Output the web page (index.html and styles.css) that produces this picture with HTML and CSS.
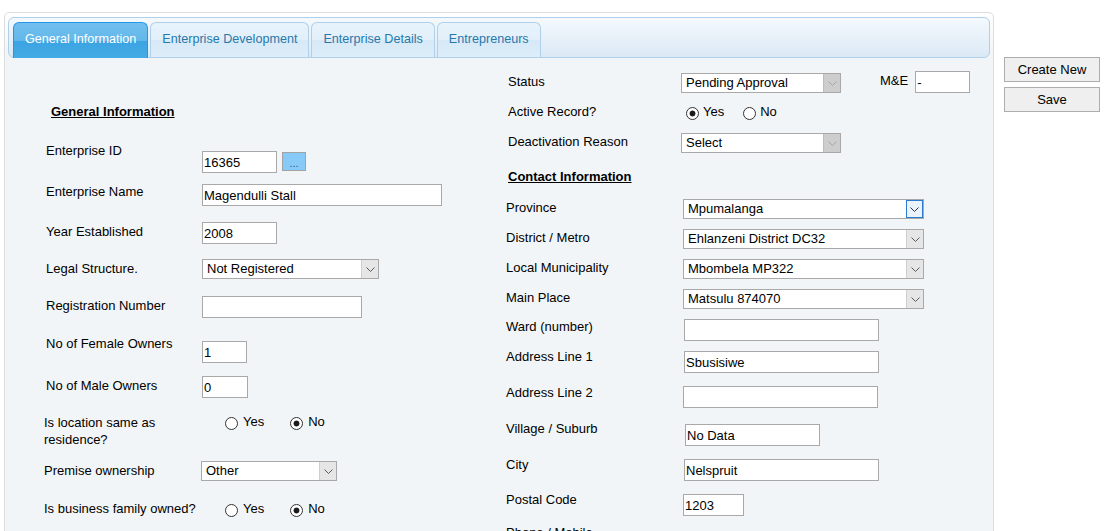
FILE: index.html
```html
<!DOCTYPE html>
<html>
<head>
<meta charset="utf-8">
<title>Enterprise</title>
<link rel="stylesheet" href="styles.css">
</head>
<body>
<div class="page">
  <div class="panel">
    <ul class="tabbar">
      <li class="tab active">General Information</li>
      <li class="tab">Enterprise Development</li>
      <li class="tab">Enterprise Details</li>
      <li class="tab">Entrepreneurs</li>
    </ul>
    <div class="content">
      <div class="col-left">
        <div class="heading">General Information</div>

        <div class="lbl">Enterprise ID</div>
        <div class="ctl ctl-id">
          <input class="txt w75" value="16365">
          <button class="dots">...</button>
        </div>

        <div class="lbl">Enterprise Name</div>
        <div class="ctl ctl-flat"><input class="txt w240" value="Magendulli Stall"></div>

        <div class="lbl">Year Established</div>
        <div class="ctl"><input class="txt w75" value="2008"></div>

        <div class="lbl">Legal Structure.</div>
        <div class="ctl">
          <div class="select w177"><span class="sel-text">Not Registered</span><span class="sel-arrow"><svg width="9" height="5" viewBox="0 0 9 5"><path d="M0.5 0.5 L4.5 4.5 L8.5 0.5"/></svg></span></div>
        </div>

        <div class="lbl">Registration Number</div>
        <div class="ctl"><input class="txt w160" value=""></div>

        <div class="lbl">No of Female Owners</div>
        <div class="ctl ctl-female"><input class="txt w45" value="1"></div>

        <div class="lbl">No of Male Owners</div>
        <div class="ctl"><input class="txt w46" value="0"></div>

        <div class="lbl lbl-wrap lbl-b">Is location same as residence?</div>
        <div class="ctl-radio">
          <div class="radios radios-wide">
            <label class="rad"><input type="radio" name="loc">Yes</label>
            <label class="rad"><input type="radio" name="loc" checked>No</label>
          </div>
        </div>

        <div class="lbl lbl-b">Premise ownership</div>
        <div class="ctl ctl-premise">
          <div class="select w136"><span class="sel-text">Other</span><span class="sel-arrow"><svg width="9" height="5" viewBox="0 0 9 5"><path d="M0.5 0.5 L4.5 4.5 L8.5 0.5"/></svg></span></div>
        </div>

        <div class="lbl lbl-b">Is business family owned?</div>
        <div class="ctl-radio">
          <div class="radios radios-wide">
            <label class="rad"><input type="radio" name="fam">Yes</label>
            <label class="rad"><input type="radio" name="fam" checked>No</label>
          </div>
        </div>
      </div>

      <div class="col-right">
        <div class="lbl lbl-r">Status</div>
        <div class="ctl-status">
          <div class="select w160 disabled"><span class="sel-text">Pending Approval</span><span class="sel-arrow"><svg width="9" height="5" viewBox="0 0 9 5"><path d="M0.5 0.5 L4.5 4.5 L8.5 0.5"/></svg></span></div>
          <span class="me-lbl">M&amp;E</span>
          <span class="me-box"><input class="txt w55" value="-"></span>
        </div>

        <div class="lbl lbl-r">Active Record?</div>
        <div class="ctl-radio">
          <div class="radios radios-tight">
            <label class="rad"><input type="radio" name="act" checked>Yes</label>
            <label class="rad"><input type="radio" name="act">No</label>
          </div>
        </div>

        <div class="lbl lbl-r">Deactivation Reason</div>
        <div class="rctl-sel0">
          <div class="select w160 disabled"><span class="sel-text">Select</span><span class="sel-arrow"><svg width="9" height="5" viewBox="0 0 9 5"><path d="M0.5 0.5 L4.5 4.5 L8.5 0.5"/></svg></span></div>
        </div>

        <div class="heading heading-r">Contact Information</div>

        <div class="lbl">Province</div>
        <div class="rctl-sel">
          <div class="select w241"><span class="sel-text">Mpumalanga</span><span class="sel-arrow focus"><svg width="9" height="5" viewBox="0 0 9 5"><path d="M0.5 0.5 L4.5 4.5 L8.5 0.5"/></svg></span></div>
        </div>

        <div class="lbl">District / Metro</div>
        <div class="rctl-sel">
          <div class="select w241"><span class="sel-text">Ehlanzeni District DC32</span><span class="sel-arrow"><svg width="9" height="5" viewBox="0 0 9 5"><path d="M0.5 0.5 L4.5 4.5 L8.5 0.5"/></svg></span></div>
        </div>

        <div class="lbl">Local Municipality</div>
        <div class="rctl-sel">
          <div class="select w241"><span class="sel-text">Mbombela MP322</span><span class="sel-arrow"><svg width="9" height="5" viewBox="0 0 9 5"><path d="M0.5 0.5 L4.5 4.5 L8.5 0.5"/></svg></span></div>
        </div>

        <div class="lbl">Main Place</div>
        <div class="rctl-sel">
          <div class="select w241"><span class="sel-text">Matsulu 874070</span><span class="sel-arrow"><svg width="9" height="5" viewBox="0 0 9 5"><path d="M0.5 0.5 L4.5 4.5 L8.5 0.5"/></svg></span></div>
        </div>

        <div class="lbl">Ward (number)</div>
        <div class="rctl-in rctl-ward"><input class="txt w195" value=""></div>

        <div class="lbl">Address Line 1</div>
        <div class="rctl-in"><input class="txt w195" value="Sbusisiwe"></div>

        <div class="lbl">Address Line 2</div>
        <div class="rctl-in rctl-addr2"><input class="txt w195" value=""></div>

        <div class="lbl">Village / Suburb</div>
        <div class="rctl-in rctl-village"><input class="txt w135" value="No Data"></div>

        <div class="lbl">City</div>
        <div class="rctl-in"><input class="txt w195" value="Nelspruit"></div>

        <div class="lbl">Postal Code</div>
        <div class="rctl-in rctl-postal"><input class="txt w61" value="1203"></div>

        <div class="lbl">Phone / Mobile</div>
        <div class="rctl-in"></div>
      </div>
    </div>
  </div>

  <div class="side">
    <button class="btn">Create New</button>
    <button class="btn">Save</button>
  </div>
</div>
</body>
</html>
```

FILE: styles.css
```css
html, body {
  margin: 0;
  padding: 0;
  overflow: hidden;
  background: #ffffff;
}

body {
  font-family: "Liberation Sans", Arial, sans-serif;
  font-size: 13px;
  color: #000;
}

.page {
  display: flex;
  align-items: flex-start;
  padding: 12px 0 0 4px;
}

/* ---------- panel + tabs ---------- */
.panel {
  width: 990px;
  min-height: 580px;
  box-sizing: border-box;
  border: 1px solid #dddddd;
  border-radius: 5px;
  background: linear-gradient(#ffffff 0px, #f2f5f7 40px);
  padding: 4px 3px;
}

.tabbar {
  list-style: none;
  margin: 0;
  padding: 4px 4px 0;
  display: flex;
  align-items: flex-start;
  border: 1px solid #aed0ea;
  border-radius: 6px;
  background: linear-gradient(#f4f9fd, #dbe9f5);
  height: 35px;
}

.tab {
  font-size: 12.6px;
  line-height: 15px;
  padding: 9px 11px 10px;
  margin-right: 2px;
  border: 1px solid #aed0ea;
  border-bottom: none;
  border-radius: 6px 6px 0 0;
  color: #2779aa;
  background: linear-gradient(#e8f3fb 0%, #e2effa 50%, #d7e9f7 51%, #ddedf9 100%);
  white-space: nowrap;
}

.tab.active {
  color: #ffffff;
  border-color: #2694e8;
  padding-bottom: 11px;
  margin-bottom: -1px;
  background: linear-gradient(#72c0ee 0%, #62b7ea 50%, #3ba3e2 51%, #45abe6 100%);
}

/* ---------- content ---------- */
.content {
  display: flex;
  align-items: flex-start;
}

.col-left {
  width: 460px;
  margin-left: 38px;
  padding-top: 46px;
  display: grid;
  grid-template-columns: 156px 1fr;
  grid-template-rows: 39px 41px 40px 37px 37px 38px 42px 36px 49px 38px auto;
}

.col-right {
  flex: 1;
  padding-top: 16px;
  display: grid;
  grid-template-columns: 175px 1fr;
  grid-template-rows: 30px 30px 35px 31px 30px 30px 30px 29px 30px 36px 36px 36px 35px 33px auto;
}

.heading {
  grid-column: 1 / -1;
  font-weight: bold;
  text-decoration: underline;
  line-height: 16px;
  margin-left: 5px;
}

.heading-r {
  margin-left: 2px;
}

.lbl {
  line-height: 16px;
  white-space: nowrap;
}

.lbl-wrap {
  white-space: normal;
  line-height: 17px;
}

.lbl-b {
  margin-left: -2px;
}

.lbl-r {
  margin-left: 2px;
}

.ctl {
  margin-top: -2px;
  display: flex;
  align-items: flex-start;
}

.ctl-id { margin-top: 8px; }
.ctl-flat { margin-top: 0; }
.ctl-female { margin-top: 5px; }
.ctl-premise { margin-left: -1px; }

.ctl-radio {
  display: flex;
}

.ctl-status {
  display: flex;
  align-items: flex-start;
}

.ctl-status .select { margin-top: -1px; }

.me-lbl {
  margin-left: 39px;
  margin-top: -1px;
  line-height: 16px;
}

.me-box {
  display: block;
  margin-left: 7px;
  margin-top: -3px;
}

.rctl-sel0 { margin-top: -1px; }
.rctl-sel { margin-top: -1px; margin-left: 2px; }
.rctl-in { margin-top: 2px; margin-left: 3px; }
.rctl-ward { margin-top: 0; }
.rctl-addr2 { margin-top: 1px; margin-left: 2px; }
.rctl-village { margin-top: 3px; margin-left: 4px; }
.rctl-postal { margin-left: 2px; }

/* ---------- inputs ---------- */
.txt {
  display: block;
  box-sizing: border-box;
  height: 22px;
  margin: 0;
  padding: 0 1px;
  border: 1px solid #a9a9a9;
  background: #fff;
  font-family: "Liberation Sans", Arial, sans-serif;
  font-size: 13px;
  color: #000;
  outline: none;
}

.w45 { width: 45px; }
.w46 { width: 46px; }
.w55 { width: 55px; }
.w61 { width: 61px; }
.w75 { width: 75px; }
.w135 { width: 135px; }
.w136 { width: 136px; }
.w160 { width: 160px; }
.w177 { width: 177px; }
.w195 { width: 195px; }
.w240 { width: 240px; }
.w241 { width: 241px; }

.dots {
  width: 24px;
  height: 19px;
  margin: 1px 0 0 5px;
  padding: 3px 0 0;
  border: 1px solid #a3a3a3;
  background: #87c9f7;
  color: #2a5fa8;
  font-family: "Liberation Sans", Arial, sans-serif;
  font-size: 11px;
  line-height: 14px;
}

/* ---------- selects ---------- */
.select {
  box-sizing: border-box;
  height: 20px;
  display: flex;
  border: 1px solid #a9a9a9;
  background: #fff;
}

.sel-text {
  flex: 1;
  padding-left: 4px;
  line-height: 18px;
  white-space: nowrap;
  overflow: hidden;
}

.sel-arrow {
  box-sizing: border-box;
  width: 17px;
  display: flex;
  align-items: center;
  justify-content: center;
  background: #e6e6e6;
  border-left: 1px solid #cfcfcf;
}

.sel-arrow svg path {
  fill: none;
  stroke: #5a5a5a;
  stroke-width: 1;
}

.sel-arrow.focus {
  border: 1px solid #2b7bd0;
  background: #eaf3fc;
}

.sel-arrow.focus svg path {
  stroke: #333;
}

.select.disabled .sel-arrow {
  background: #cdcdcd;
  border-left: 1px solid #bdbdbd;
}

.select.disabled .sel-arrow svg path {
  stroke: #a4a4a4;
}

/* ---------- radios ---------- */
.radios {
  display: flex;
  align-items: flex-start;
  line-height: 16px;
}

.radios-wide { margin-left: 23px; }
.radios-wide .rad { margin-right: 26px; }

.radios-tight { margin-left: 5px; }
.radios-tight .rad { margin-right: 19px; }

.rad {
  display: flex;
  align-items: flex-start;
}

.rad input {
  -webkit-appearance: none;
  appearance: none;
  box-sizing: border-box;
  width: 13px;
  height: 13px;
  margin: 3px 4px 0 0;
  border: 1px solid #333;
  border-radius: 50%;
  background: #fff;
}

.radios-wide .rad input { margin-right: 5px; }

.rad input:checked {
  background: radial-gradient(circle, #1b1b1b 0, #1b1b1b 2.6px, #ffffff 3.3px);
}

/* ---------- side buttons ---------- */
.side {
  display: flex;
  flex-direction: column;
  gap: 5px;
  margin: 45px 0 0 10px;
}

.btn {
  width: 96px;
  height: 25px;
  padding: 0;
  border: 1px solid #adadad;
  background: #efefef;
  color: #000;
  font-family: "Liberation Sans", Arial, sans-serif;
  font-size: 13px;
}
```
